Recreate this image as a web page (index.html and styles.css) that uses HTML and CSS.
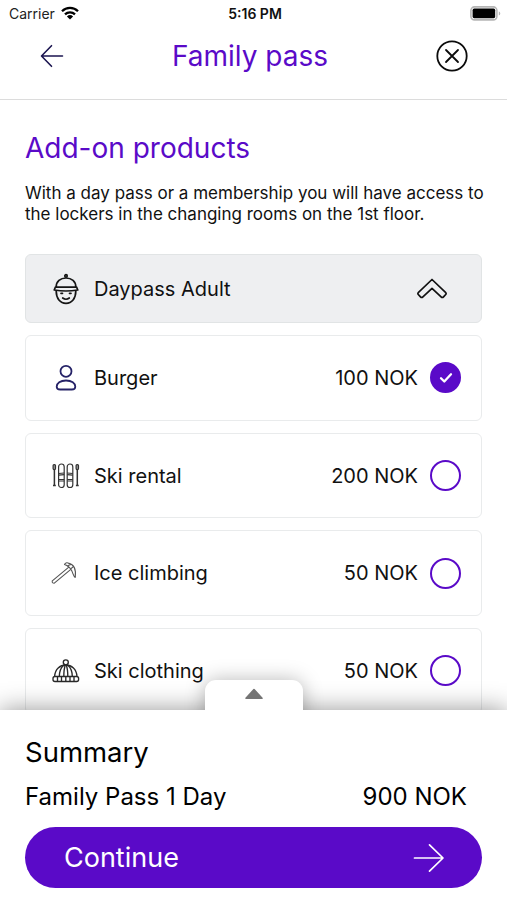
FILE: index.html
```html
<!DOCTYPE html>
<html lang="en">
<head>
<meta charset="utf-8">
<meta name="viewport" content="width=device-width, initial-scale=1">
<title>Family pass</title>
<link rel="stylesheet" href="styles.css">
</head>
<body>
<div class="app">
  <div class="status">
    <div class="carrier"><span>Carrier</span>
      <svg width="18" height="14" viewBox="0 0 18 14"><g fill="none" stroke="#000" stroke-width="2.3"><path d="M1 5.2a11.4 11.4 0 0 1 16 0"/><path d="M4 8.3a7.2 7.2 0 0 1 10 0"/></g><path d="M5.9 10.4a4.5 4.5 0 0 1 6.2 0L9 13.6Z"/></svg>
    </div>
    <span class="time">5:16 PM</span>
    <svg class="battery" width="31" height="15" viewBox="0 0 31 15"><rect x=".9" y=".9" width="26" height="13" rx="3.6" fill="#fff" stroke="#b5b5b5" stroke-width="1.6"/><rect x="2.6" y="2.6" width="22.6" height="9.6" rx="1.6"/><path d="M28.8 5.2c2 .8 2 3.6 0 4.4Z" fill="#b5b5b5"/></svg>
  </div>
  <header class="header">
    <svg width="24" height="24" viewBox="0 0 24 24" fill="none" stroke="#1b1550" stroke-width="1.6" stroke-linecap="round" stroke-linejoin="round"><path d="M22.5 12H1.8M11.5 1.7 1.5 12l10 10.3"/></svg>
    <h1 class="title">Family pass</h1>
    <svg width="32" height="32" viewBox="0 0 32 32" fill="none" stroke="#0b0b0b" stroke-width="1.8" stroke-linecap="round"><circle cx="16" cy="16" r="14.7"/><path d="m10 10 12 12M22 10 10 22"/></svg>
  </header>
  <main class="content">
    <h2 class="heading">Add-on products</h2>
    <p class="intro">With a day pass or a membership you will have access to<br>the lockers in the changing rooms on the 1st floor.</p>
    <div class="list">
      <div class="card group">
        <svg class="icon" width="30" height="32" viewBox="0 0 30 32" fill="none" stroke="#151515" stroke-width="1.7" stroke-linejoin="round" stroke-linecap="round"><circle cx="15" cy="2.9" r="1.2"/><path d="M5.2 14.2C5 8.5 9.5 5 15 5s10 3.500 9.800 9.200"/><path d="M4.400 14.200h21.200l1.200 2.800c-7 1.200-16.600 1.200-23.600 0Z"/><path d="M5.200 18c0 7.500 4 12.300 9.800 12.300S24.800 25.500 24.800 18"/><path d="M10 20.300h1.500M18.500 20.300H20M11.700 25q3.300 2.500 6.600 0"/></svg>
        <span class="name">Daypass Adult</span>
        <svg class="chevron" width="32" height="22" viewBox="0 0 32 22" fill="none" stroke="#111" stroke-width="1.700" stroke-linejoin="round"><path d="M16 1.500 29.500 14.300q1.300 1.200 0 2.400l-2 2.200q-1.200 1.200-2.400 0L16 10.300 6.900 18.900q-1.200 1.200-2.400 0l-2-2.200q-1.300-1.200 0-2.400Z"/></svg>
      </div>
      <div class="card">
        <svg class="icon" width="30" height="32" viewBox="0 0 30 32" fill="none" stroke="#252267" stroke-width="1.800"><circle cx="15" cy="9.300" r="5.500"/><path d="M15 18.500c-5.700 0-9.300 2.700-9.300 6.200 0 2 1.300 2.800 3.500 2.800h11.600c2.200 0 3.500-.8 3.500-2.800 0-3.500-3.600-6.200-9.300-6.200Z"/></svg>
        <span class="name">Burger</span><span class="price">100 NOK</span>
        <span class="radio checked"><svg width="14" height="12" viewBox="0 0 14 12" fill="none" stroke="#fff" stroke-width="2.300" stroke-linecap="round" stroke-linejoin="round"><path d="m2 6.200 3.300 3.300L12 2.300"/></svg></span>
      </div>
      <div class="card">
        <svg class="icon" width="30" height="32" viewBox="0 0 30 32" fill="none" stroke="#333" stroke-width="1.200"><rect x="7.600" y="4" width="5.600" height="23.500" rx="2.800"/><rect x="16.200" y="4" width="5.600" height="23.500" rx="2.800"/><path d="M7.600 13.500l5.600-.5M7.600 15.200l5.600-.5M7.600 19.500h5.600M7.600 21h5.600M16.200 13l5.600.5M16.200 14.700l5.600.5M16.200 19.500h5.600M16.200 21h5.600"/><rect x="2.100" y="4.600" width="2.400" height="5" rx="1" fill="#999"/><rect x="25.100" y="4.600" width="2.400" height="5" rx="1" fill="#999"/><path d="M3.400 9.500V26M26.300 9.500V26M2 25.500h2.800M24.900 25.500h2.800" stroke-width="1.500"/></svg>
        <span class="name">Ski rental</span><span class="price">200 NOK</span><span class="radio"></span>
      </div>
      <div class="card">
        <svg class="icon" width="30" height="32" viewBox="0 0 30 32" fill="none" stroke="#555" stroke-width="1.100" stroke-linejoin="round"><path d="M17.800 10.200 1.300 23.800q-.6 1.500.8 2.200l1.200.2L19.800 12.300"/><path d="M13.500 7.600c.6-2 2.200-2 3.800-1.500 5.500 1.200 8 6.400 6.900 14.300-1.400-.5-2-3.400-3.300-6.300-1.300-2.600-3.300-5.100-7.400-6.500Z"/><path d="m16.500 8.800 3.400-1.300M19.500 12l2.600-2.200"/></svg>
        <span class="name">Ice climbing</span><span class="price">50 NOK</span><span class="radio"></span>
      </div>
      <div class="card">
        <svg class="icon" width="30" height="32" viewBox="0 0 30 32" fill="none" stroke="#292929" stroke-width="1.350" stroke-linejoin="round"><circle cx="14.800" cy="7.300" r="2.500"/><path d="M3.600 21.500C4 14 9 10 14.800 10s10.800 4 11.200 11.500"/><rect x="2" y="21.500" width="25.600" height="5" rx="2"/><path d="M8.300 21.500c0-5 1.800-9 4.300-11.300M12.800 21.500c0-5 .6-9 1.500-11.500M16.800 21.500c0-5-.6-9-1.500-11.500M21.300 21.500c0-5-1.800-9-4.300-11.300M6.500 21.500v5M10.500 21.500v5M14.800 21.500v5M19 21.500v5M23 21.500v5"/></svg>
        <span class="name">Ski clothing</span><span class="price">50 NOK</span><span class="radio"></span>
      </div>
    </div>
  </main>
  <footer class="sheet">
    <div class="handle"><svg width="20" height="12" viewBox="0 0 20 12"><path d="M10 1.500 18 10.200H2Z" fill="#757575" stroke="#757575" stroke-width="1.600" stroke-linejoin="round"/></svg></div>
    <div class="sheet-body">
      <h3 class="summary">Summary</h3>
      <div class="total"><span class="pass">Family Pass 1 Day</span><span class="amount">900 NOK</span></div>
      <button class="continue"><span>Continue</span>
        <svg width="32" height="30" viewBox="0 0 32 30" fill="none" stroke="#fff" stroke-width="1.700" stroke-linecap="round" stroke-linejoin="round"><path d="M1.500 15h28M16.500 1.800 30 15 16.500 28.200"/></svg>
      </button>
    </div>
  </footer>
</div>
</body>
</html>
```
FILE: styles.css
```css
* { box-sizing: border-box; }
body { margin: 0; background: #fff; font-family: Inter, "Liberation Sans", sans-serif; color: #111; }
h1, h2, h3, p { margin: 0; font-weight: 400; }
svg { display: block; flex: none; }
span, h1, h2, h3 { white-space: nowrap; }
.app { height: 900px; display: flex; flex-direction: column; overflow: hidden; }
.status { height: 27px; flex: none; display: grid; grid-template-columns: 1fr auto 1fr; align-items: center; padding: 0 6px 0 9px; font-size: 14px; }
.carrier { display: flex; align-items: center; gap: 6px; color: #222; }
.carrier svg { margin-top: -2px; }
.time { font-weight: 600; }
.battery { justify-self: end; }
.header { height: 73px; flex: none; display: flex; justify-content: space-between; align-items: center; padding: 0 39px 14px 40px; border-bottom: 1px solid #dcdcdc; }
.title { font-size: 28px; line-height: 34px; color: #5a0ac8; }
.content { flex: 1; min-height: 0; overflow: hidden; padding: 30px 25px 0; }
.heading { font-size: 28px; line-height: 36px; color: #5a0ac8; }
.intro { margin-top: 17px; font-size: 17px; line-height: 21px; white-space: nowrap; }
.list { margin-top: 29px; display: flex; flex-direction: column; gap: 12px; }
.card { height: 85.700px; flex: none; display: flex; align-items: center; padding: 0 20px 0 25px; border: 1.500px solid #e9ebec; border-radius: 6px; font-size: 20px; }
.group { height: 69px; background: #eeeff1; border-color: #e1e4e5; }
.icon { margin-right: 13px; }
.name { flex: 1; }
.chevron { margin-right: 13px; }
.radio { width: 31px; height: 31px; margin-left: 12px; flex: none; border: 2.500px solid #5a0ac8; border-radius: 50%; }
.checked { background: #5a0ac8; display: flex; align-items: center; justify-content: center; }
.sheet { position: relative; height: 190px; flex: none; box-shadow: 0 0 24px rgba(0, 0, 0, .42); }
.handle { position: absolute; left: 205px; top: -30px; width: 98px; height: 60px; padding-top: 8px; display: flex; justify-content: center; border-radius: 11px 11px 0 0; background: #fff; box-shadow: 0 0 20px rgba(0, 0, 0, .28); }
.sheet-body { position: relative; height: 100%; padding: 24px 25px 0; background: #fff; color: #000; }
.summary { font-size: 27.500px; line-height: 36px; }
.total { display: flex; justify-content: space-between; margin-top: 11px; padding-right: 15px; font-size: 24px; line-height: 32px; }
.continue { width: 100%; height: 61px; margin-top: 14px; border: 0; border-radius: 31px; display: flex; align-items: center; justify-content: space-between; padding: 0 37px 0 39px; background: #5a0ac8; color: #fff; font: 400 27px Inter, "Liberation Sans", sans-serif; }
```
